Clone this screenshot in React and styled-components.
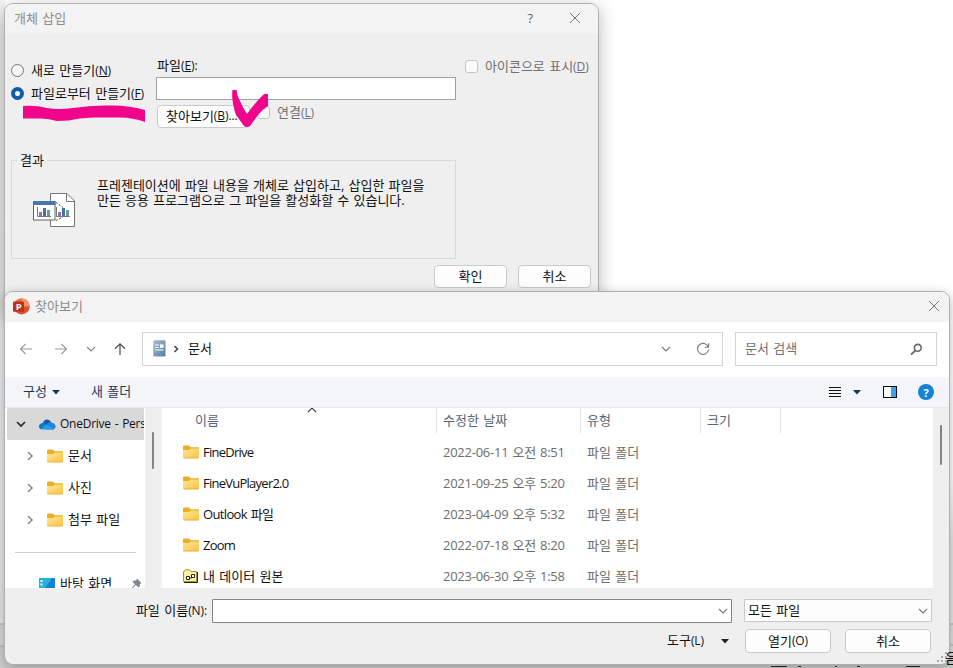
import React from 'react';
import styled, { createGlobalStyle } from 'styled-components';

const GlobalStyle = createGlobalStyle`
  * {
    box-sizing: border-box;
  }

  body {
    margin: 0;
    background: #fff;
    font-family: "Open Sans", "Noto Sans CJK KR", sans-serif;
    font-size: 13px;
    font-weight: 400;
    word-spacing: 1px;
    color: #111;
  }
`;

const treeItems = ['문서', '사진', '첨부 파일'];

const files = [
    { name: 'FineDrive', date: '2022-06-11 오전 8:51', type: '파일 폴더', spacing: '-0.75px' },
    { name: 'FineVuPlayer2.0', date: '2021-09-25 오후 5:20', type: '파일 폴더', spacing: '-0.75px' },
    { name: 'Outlook 파일', date: '2023-04-09 오후 5:32', type: '파일 폴더', spacing: '-0.65px' },
    { name: 'Zoom', date: '2022-07-18 오전 8:20', type: '파일 폴더', spacing: '-0.8px' },
    { name: '내 데이터 원본', date: '2023-06-30 오후 1:58', type: '파일 폴더', spacing: '0px', source: true },
];

const CloseIcon = () => (
    <svg width="12" height="12" viewBox="0 0 12 12">
        <path d="M1 1L11 11M11 1L1 11" stroke="#777" strokeWidth="1" fill="none" />
    </svg>
);

const Chevron = ({ d = 'M1 3L5 7L9 3', color = '#777', width = 1.1 }) => (
    <svg width="10" height="10" viewBox="0 0 10 10">
        <path d={d} stroke={color} strokeWidth={width} fill="none" />
    </svg>
);

const Caret = ({ color = '#1d3557' }) => (
    <svg width="8" height="5" viewBox="0 0 8 5">
        <path d="M0 0H8L4 4.6Z" fill={color} />
    </svg>
);

const FolderIcon = () => (
    <svg width="16" height="14" viewBox="0 0 16 14">
        <defs>
            <linearGradient id="folder" x1="0" y1="0" x2="1" y2="1">
                <stop offset="0" stopColor="#ffe69a" />
                <stop offset="1" stopColor="#f9c440" />
            </linearGradient>
        </defs>
        <path d="M0 1.6Q0 .5 1.1 .5H5.6L7.6 2.3H15Q16 2.3 16 3.3V8H0Z" fill="#e9ae24" />
        <path d="M0 5H6L7.8 3.5H15.2Q16 3.5 16 4.3V12.5Q16 13.3 15.2 13.3H.8Q0 13.3 0 12.5Z" fill="url(#folder)" />
        <path d="M.5 13H15.5" stroke="#dfa32a" strokeWidth=".7" />
    </svg>
);

const DataSourceIcon = () => (
    <svg width="16" height="14" viewBox="0 0 16 14">
        <path d="M.5 12.5V3L2.5 .8H6.5L8 2.5H13.5V12.5Z" fill="#fff3a6" stroke="#a98f2a" />
        <path d="M14.5 3V13.5H1" fill="none" stroke="#222" />
        <path d="M3.5 10.5V7.5H6.5V10.5ZM8.5 5.5H11.5V8.5H8.5ZM6.5 9H8.5V8" fill="#fff" stroke="#222" strokeWidth="1" />
    </svg>
);

const CloudIcon = () => (
    <svg width="17" height="11" viewBox="0 0 17 11">
        <path d="M1.2 6.5Q2.2 4.6 3.9 4.1Q4.8 .5 8 .5Q11 .4 12.3 3.4L8.5 7.5Z" fill="#0f5fb5" />
        <path d="M12 3.4Q16.3 4 16.6 7.4Q16.5 10.5 13 10.6H7L8.4 4.5Q10 3.2 12 3.4Z" fill="#2387d8" />
        <path d="M0 7.5Q.3 4.3 3.8 4.2Q5.2 4.1 7 5.2L14.8 10.1Q14 10.6 13 10.6H3.4Q.2 10.4 0 7.5Z" fill="#2b9ce8" />
        <path d="M0 7.5Q.3 4.3 3.8 4.2Q5.2 4.1 7 5.2L2 10.2Q.2 9.4 0 7.5Z" fill="#1478cc" />
    </svg>
);

const PowerPointIcon = () => (
    <svg width="17" height="17" viewBox="0 0 17 17">
        <circle cx="8.7" cy="8.4" r="8" fill="#d9532f" />
        <path d="M8.7 .4A8 8 0 0 1 16.7 8.4H8.7Z" fill="#ff9070" />
        <path d="M8.7 .4A8 8 0 0 0 .9 7H8.7Z" fill="#ee6c49" />
        <rect x="0" y="3.4" width="11" height="10.4" rx="1" fill="#b93418" />
        <text x="2.7" y="12" fontSize="9.5" fontWeight="700" fill="#fff">P</text>
    </svg>
);

const DocumentIcon = () => (
    <svg width="13" height="17" viewBox="0 0 13 17">
        <defs>
            <linearGradient id="doc" x1="0" y1="0" x2="1" y2="1">
                <stop offset="0" stopColor="#a9bfd5" />
                <stop offset="1" stopColor="#58799d" />
            </linearGradient>
        </defs>
        <rect x=".3" y=".3" width="12.2" height="16.2" rx="1.2" fill="url(#doc)" />
        <path d="M2.2 5H6M2.2 7.5H6M2.2 10H10.5" stroke="#fff" strokeWidth="1.1" />
        <rect x="7" y="4.4" width="3.6" height="3.4" fill="#fff" />
    </svg>
);

const EmbedIcon = () => (
    <svg width="43" height="35" viewBox="0 0 43 35">
        <path d="M17.5 .5H34L41.5 8V33.5H17.5Z" fill="#fff" stroke="#767676" />
        <path d="M33.5 .5V8.5H41.5" fill="none" stroke="#767676" />
        <rect x=".5" y="8.5" width="21.5" height="18.5" fill="#fff" stroke="#5f6468" />
        <rect x="0" y="8" width="22.5" height="4" fill="#4777aa" />
        <path d="M23 9.5L30 14.5M23 27.5L30 24" stroke="#555" strokeDasharray="2 1.5" />
        <path d="M4.5 14V23.5H18M23.5 14V23.5H37" fill="none" stroke="#777" />
        <path d="M6 19H9V23H6ZM25 19H28V23H25Z" fill="#9a6fb5" />
        <path d="M10 15H13V23H10ZM29 15H32V23H29Z" fill="#4272aa" />
        <path d="M14 17H17V23H14ZM33 17H36V23H33Z" fill="#6d9e8c" />
    </svg>
);

const InsertObjectDialog = () => (
    <InsertWindow>
        <TitleBar>
            <TitleText $left={9}>개체 삽입</TitleText>
            <HelpMark>?</HelpMark>
            <CloseButton $right={17}><CloseIcon /></CloseButton>
        </TitleBar>
        <Options>
            <RadioColumn>
                <RadioRow><Radio /><Label>새로 만들기<Key>(<u>N</u>)</Key></Label></RadioRow>
                <RadioRow><Radio $checked /><Label>파일로부터 만들기<Key>(<u>F</u>)</Key></Label></RadioRow>
            </RadioColumn>
            <FileColumn>
                <FieldLabel>파일<Key>(<u>E</u>):</Key></FieldLabel>
                <PathInput />
                <BrowseRow>
                    <BrowseButton>찾아보기<Key>(<u>B</u>)...</Key></BrowseButton>
                    <CheckLabel $link><CheckBox /><Label>연결<Key>(<u>L</u>)</Key></Label></CheckLabel>
                </BrowseRow>
            </FileColumn>
            <CheckLabel><CheckBox /><Label>아이콘으로 표시<Key>(<u>D</u>)</Key></Label></CheckLabel>
        </Options>
        <ResultGroup>
            <ResultLegend>결과</ResultLegend>
            <EmbedIcon />
            <ResultText>
                프레젠테이션에 파일 내용을 개체로 삽입하고, 삽입한 파일을<br />
                만든 응용 프로그램으로 그 파일을 활성화할 수 있습니다.
            </ResultText>
        </ResultGroup>
        <DialogActions>
            <Button $width={73} $height={23}>확인</Button>
            <Button $width={73} $height={23}>취소</Button>
        </DialogActions>
    </InsertWindow>
);

const BrowseDialog = () => (
    <BrowseWindow>
        <BrowseTitle>
            <PowerPointIcon />
            <TitleText $left={5}>찾아보기</TitleText>
            <CloseButton $right={9}><CloseIcon /></CloseButton>
        </BrowseTitle>
        <NavBar>
            <NavArrows>
                <svg width="14" height="14" viewBox="0 0 14 14">
                    <path d="M13 7H1.5M6.5 2L1.5 7L6.5 12" stroke="#999" fill="none" strokeWidth="1.1" />
                </svg>
                <svg width="14" height="14" viewBox="0 0 14 14">
                    <path d="M1 7H12.5M7.5 2L12.5 7L7.5 12" stroke="#999" fill="none" strokeWidth="1.1" />
                </svg>
                <Chevron color="#888" />
                <svg width="14" height="14" viewBox="0 0 14 14">
                    <path d="M7 13V1.8M2 6.8L7 1.8L12 6.8" stroke="#555" fill="none" strokeWidth="1.3" />
                </svg>
            </NavArrows>
            <AddressBox>
                <DocumentIcon />
                <Chevron d="M3.5 2L6.5 5L3.5 8" color="#444" width={1.5} />
                <AddressText>문서</AddressText>
                <Chevron color="#777" />
                <svg width="14" height="14" viewBox="0 0 14 14">
                    <path d="M12.2 5A5.5 5.5 0 1 0 12.5 7.5M12.6 1.3V5.2H8.7" stroke="#777" fill="none" strokeWidth="1.1" />
                </svg>
            </AddressBox>
            <SearchBox>
                <SearchHint>문서 검색</SearchHint>
                <svg width="13" height="13" viewBox="0 0 13 13">
                    <circle cx="7.8" cy="4.8" r="3.4" stroke="#666" strokeWidth="1.6" fill="none" />
                    <path d="M5.4 7.4L1 11.6" stroke="#666" strokeWidth="2" />
                </svg>
            </SearchBox>
        </NavBar>
        <ToolBar>
            <ToolText>구성</ToolText>
            <Caret />
            <ToolText $left={31}>새 폴더</ToolText>
            <ViewTools>
                <svg width="12" height="11" viewBox="0 0 12 11">
                    <path d="M0 .5H12M0 3.5H12M0 6.5H12M0 9.5H12" stroke="#111" strokeWidth="1" />
                </svg>
                <Caret />
                <svg width="14" height="12" viewBox="0 0 14 12">
                    <rect x=".5" y=".5" width="13" height="11" fill="#fff" stroke="#111" />
                    <rect x="8" y="1" width="5" height="10" fill="#38a5e6" />
                </svg>
                <HelpBadge>?</HelpBadge>
            </ViewTools>
        </ToolBar>
        <Content>
            <Sidebar>
                <DriveItem>
                    <Chevron color="#222" width={1.6} />
                    <CloudIcon />
                    <span>OneDrive - Pers</span>
                </DriveItem>
                {treeItems.map((item) => (
                    <TreeItem key={item}>
                        <Chevron d="M3 1L7 5L3 9" color="#888" width={1.5} />
                        <FolderIcon />
                        <Label>{item}</Label>
                    </TreeItem>
                ))}
                <TreeDivider />
                <DesktopItem>
                    <svg width="16" height="13" viewBox="0 0 16 13">
                        <rect width="16" height="13" rx="1" fill="#1583cc" />
                        <path d="M0 1Q0 0 1 0H13L4 13H0Z" fill="#26b2d8" />
                        <path d="M1.5 2H3.5V4H1.5ZM1.5 5.5H3.5V7.5H1.5Z" fill="#e8fbff" />
                    </svg>
                    <span>바탕 화면</span>
                    <svg width="11" height="12" viewBox="0 0 11 12">
                        <path d="M6 .5L10.5 5L9 6L8.7 8.5L7.5 9.5L4.8 7L1 11L.5 10.5L4 6.3L1.5 3.7L2.8 2.6L5.2 2.4Z" fill="#7c8790" />
                    </svg>
                </DesktopItem>
            </Sidebar>
            <ScrollTrack $top={24} $height={37} />
            <FileList>
                <ListHeader>
                    <HeadCell>이름<SortMark><Chevron d="M1 7L5 3L9 7" color="#444" /></SortMark></HeadCell>
                    <HeadCell>수정한 날짜</HeadCell>
                    <HeadCell>유형</HeadCell>
                    <HeadCell>크기</HeadCell>
                </ListHeader>
                {files.map((file) => (
                    <FileRow key={file.name}>
                        <FileName $spacing={file.spacing}>
                            {file.source ? <DataSourceIcon /> : <FolderIcon />}
                            {file.name}
                        </FileName>
                        <FileInfo $spacing="-0.25px">{file.date}</FileInfo>
                        <FileInfo>{file.type}</FileInfo>
                    </FileRow>
                ))}
            </FileList>
            <ScrollTrack $top={17} $height={40} />
        </Content>
        <Footer>
            <FooterRow>
                <NameLabel>파일 이름<Key>(N):</Key></NameLabel>
                <NameCombo><Chevron /></NameCombo>
                <TypeSelect><Label>모든 파일</Label><Chevron /></TypeSelect>
            </FooterRow>
            <ButtonRow>
                <ToolsLabel>도구<Key>(L)</Key></ToolsLabel>
                <Caret color="#222" />
                <Button $width={86} $height={24} $left={16}>열기<Key>(O)</Key></Button>
                <Button $width={86} $height={24} $left={14}>취소</Button>
            </ButtonRow>
        </Footer>
        <ResizeGrip width="10" height="10" viewBox="0 0 10 10">
            <path d="M8 0h2v2h-2zM4 4h2v2h-2zM8 4h2v2h-2zM0 8h2v2h-2zM4 8h2v2h-2zM8 8h2v2h-2z" fill="#aaa" />
        </ResizeGrip>
    </BrowseWindow>
);

const App = () => (
    <Desktop>
        <GlobalStyle />
        <LeftEdge />
        <RightEdge />
        <BottomEdge>
            <StatusPiece $left={771} $width={16} />
            <StatusPiece $left={798} $width={3} />
            <StatusPiece $left={835} $width={2} />
            <StatusPiece $left={857} $width={3} />
            <StatusPiece $left={906} $width={14} />
        </BottomEdge>
        <EdgeText>음</EdgeText>
        <InsertObjectDialog />
        <Marker width="260" height="50" viewBox="20 85 260 50">
            <path d="M23 106Q36 105 47 108Q58 110 73 108Q92 105 110 105.5Q128 105 145 110V122Q132 117 117 117.5H94Q78 118 69 120.5L57 121Q47 118 39 118.5L23 118.5Z" />
            <path d="M232.5 90H236.5Q237 96 240 101Q243 108 247 114Q253 105 263 95Q266 93 268 94.5V106Q263 109 258 115L250 126Q247 128 244 126L236 115Q231 100 232.5 90Z" />
        </Marker>
        <BrowseDialog />
    </Desktop>
);

const Desktop = styled.div`
  position: relative;
  width: 953px;
  height: 668px;
  overflow: hidden;
  background: #fff;
`;

const LeftEdge = styled.div`
  position: absolute;
  left: 0;
  top: 0;
  width: 5px;
  height: 668px;
  background: linear-gradient(#f6f6f6 0, #e9e9e9 40px, #e6e6e6 623px, #aaa 624px, #d8d8d8 625px, #d8d8d8 645px, #aaa 646px, #d0d0d0 647px);
`;

const RightEdge = styled.div`
  position: absolute;
  right: 0;
  top: 480px;
  width: 10px;
  height: 188px;
  background: linear-gradient(#fff 0, #e6e6e6 60px, #e6e6e6 143px, #aaa 144px, #dedede 145px, #dedede 164px, #aaa 165px, #dedede 166px);
`;

const BottomEdge = styled.div`
  position: absolute;
  left: 0;
  top: 655px;
  width: 953px;
  height: 13px;
  background: #cfcfcf;
`;

const StatusPiece = styled.div`
  position: absolute;
  left: ${(props) => props.$left}px;
  top: 11px;
  width: ${(props) => props.$width}px;
  height: 1px;
  background: #333;
`;

const EdgeText = styled.div`
  position: absolute;
  left: 945px;
  top: 649px;
  line-height: 18px;
  font-size: 14px;
  z-index: 3;
  width: 8px;
  overflow: hidden;
`;

const Window = styled.div`
  position: absolute;
  display: flex;
  flex-direction: column;
  border: 1px solid #adb0b0;
  border-radius: 9px;
  overflow: hidden;
  background: #efefef;
`;

const InsertWindow = styled(Window)`
  left: 4px;
  top: 3px;
  width: 595px;
  height: 310px;
  box-shadow: 0 4px 18px rgba(0, 0, 0, 0.28);
`;

const BrowseWindow = styled(Window)`
  left: 4px;
  top: 291px;
  width: 946px;
  height: 374px;
  box-shadow: 0 3px 12px rgba(0, 0, 0, 0.28);
`;

const TitleBar = styled.div`
  display: flex;
  align-items: center;
  flex: none;
  height: 30px;
  padding-bottom: 2px;
  background: #f3f3f3;
`;

const BrowseTitle = styled(TitleBar)`
  padding-left: 8px;
`;

const TitleText = styled.div`
  margin-left: ${(props) => props.$left}px;
  color: #8c8c8c;
  line-height: 18px;
`;

const HelpMark = styled.div`
  margin-left: auto;
  margin-right: 36px;
  color: #666;
`;

const CloseButton = styled.div`
  display: flex;
  margin-left: auto;
  margin-right: ${(props) => props.$right}px;

  ${HelpMark} + & {
    margin-left: 0;
  }
`;

const Label = styled.span`
  padding-bottom: 2px;
`;

const Key = styled.span`
  font-size: 12px;
  letter-spacing: -0.1px;

  u {
    text-underline-offset: 1px;
  }
`;

const Options = styled.div`
  display: grid;
  grid-template-columns: 145px 300px 128px;
  height: 98px;
  padding-left: 6px;
  padding-top: 22px;
`;

const RadioColumn = styled.div`
  padding-top: 3px;
`;

const RadioRow = styled.div`
  display: flex;
  align-items: center;
  height: 23px;
  white-space: nowrap;
`;

const Radio = styled.span`
  flex: none;
  width: 13px;
  height: 13px;
  margin-right: 7px;
  border: ${(props) => (props.$checked ? '4px solid #0b5cad' : '1px solid #777')};
  border-radius: 50%;
  background: ${(props) => (props.$checked ? '#fff' : '#f6f6f6')};
`;

const FileColumn = styled.div`
  display: flex;
  flex-direction: column;
`;

const FieldLabel = styled.div`
  height: 21px;
  padding-left: 1px;
  line-height: 18px;
`;

const PathInput = styled.div`
  height: 23px;
  border: 1px solid #a0a0a0;
  background: #fff;
`;

const BrowseRow = styled.div`
  display: flex;
  padding: 5px 0 0 1px;
`;

const Button = styled.div`
  display: flex;
  align-items: center;
  justify-content: center;
  flex: none;
  width: ${(props) => props.$width}px;
  height: ${(props) => props.$height}px;
  margin-left: ${(props) => props.$left || 0}px;
  padding-bottom: 2px;
  border: 1px solid #cacaca;
  border-radius: 4px;
  background: #fdfdfd;
  white-space: nowrap;
`;

const BrowseButton = styled(Button).attrs({ $width: 93, $height: 23 })`
  justify-content: flex-start;
  padding-left: 8px;
`;

const CheckLabel = styled.div`
  display: flex;
  align-items: center;
  height: 20px;
  margin-left: ${(props) => (props.$link ? 7 : 9)}px;
  margin-top: ${(props) => (props.$link ? -3 : 0)}px;
  color: #707070;
  white-space: nowrap;
`;

const CheckBox = styled.span`
  flex: none;
  width: 13px;
  height: 13px;
  margin-right: 7px;
  border: 1px solid #c4c4c4;
  border-radius: 3px;
  background: #fbfbfb;
`;

const ResultGroup = styled.div`
  position: relative;
  display: flex;
  align-items: flex-start;
  flex: none;
  width: 445px;
  height: 99px;
  margin: 28px 0 0 6px;
  padding: 0 0 0 21px;
  border: 1px solid #d9d9d9;

  > svg {
    margin-top: 32px;
  }
`;

const ResultLegend = styled.div`
  position: absolute;
  left: 5px;
  top: -10px;
  padding: 0 3px;
  line-height: 18px;
  background: #efefef;
`;

const ResultText = styled.div`
  margin: 17px 0 0 21px;
  line-height: 15px;
  word-spacing: 0.8px;
  white-space: nowrap;
`;

const DialogActions = styled.div`
  display: flex;
  gap: 11px;
  padding: 6px 0 0 429px;
`;

const Marker = styled.svg`
  position: absolute;
  left: 20px;
  top: 85px;
  fill: #f0048c;
`;

const NavBar = styled.div`
  display: flex;
  flex: none;
  height: 55px;
  padding-top: 10px;
  background: #fff;
`;

const NavArrows = styled.div`
  display: flex;
  align-items: center;
  width: 137px;
  height: 34px;
  padding-left: 14px;

  svg:nth-child(2) {
    margin-left: 21px;
  }

  svg:nth-child(3) {
    margin-left: 18px;
  }

  svg:nth-child(4) {
    margin-left: 17px;
  }
`;

const AddressBox = styled.div`
  display: flex;
  align-items: center;
  width: 581px;
  height: 34px;
  padding: 0 12px 0 10px;
  border: 1px solid #d5d5d5;

  svg:first-child {
    margin-bottom: 2px;
  }

  svg:nth-child(2) {
    margin-left: 5px;
  }

  svg:last-child {
    margin-left: 25px;
  }
`;

const AddressText = styled.div`
  flex: 1;
  margin-left: 7px;
  padding-bottom: 3px;
`;

const SearchBox = styled.div`
  display: flex;
  align-items: center;
  justify-content: space-between;
  width: 202px;
  height: 34px;
  margin-left: 12px;
  padding: 0 13px 0 9px;
  border: 1px solid #d5d5d5;
  color: #707070;
`;

const SearchHint = styled.div`
  padding-bottom: 3px;
`;

const ToolBar = styled.div`
  display: flex;
  align-items: center;
  flex: none;
  height: 31px;
  padding-left: 18px;
  border-bottom: 1px solid #e4e6e8;
  background: #f3f5f8;
`;

const ToolText = styled.div`
  margin-left: ${(props) => props.$left || 0}px;
  margin-right: 5px;
  padding-bottom: 3px;
  color: #1d3557;
`;

const ViewTools = styled.div`
  display: flex;
  align-items: center;
  margin-left: auto;
  padding-right: 15px;

  svg:nth-child(2) {
    margin: 0 22px 0 12px;
  }
`;

const HelpBadge = styled.div`
  display: flex;
  align-items: center;
  justify-content: center;
  width: 16px;
  height: 16px;
  margin-left: 21px;
  border-radius: 50%;
  background: #1383d8;
  color: #fff;
  font-size: 11px;
  font-weight: 700;
`;

const Content = styled.div`
  display: flex;
  flex: none;
  height: 180px;
  overflow: hidden;
`;

const Sidebar = styled.div`
  width: 140px;
  height: 180px;
  padding-left: 2px;
  overflow: hidden;
  background: #fff;
  white-space: nowrap;
`;

const DriveItem = styled.div`
  display: flex;
  align-items: center;
  width: 137px;
  height: 32px;
  padding-left: 9px;
  overflow: hidden;
  border-radius: 2px 0 0 2px;
  background: #d9d9d9;

  svg + svg {
    margin: 0 4px 0 13px;
  }

  svg,
  span {
    flex: none;
  }

  span {
    padding-bottom: 1px;
    font-size: 12px;
    letter-spacing: -0.25px;
  }
`;

const TreeItem = styled.div`
  display: flex;
  align-items: center;
  height: 32px;
  padding-left: 18px;
  padding-bottom: 1px;

  svg + svg {
    margin: 0 5px 0 12px;
  }
`;

const TreeDivider = styled.div`
  width: 121px;
  height: 1px;
  margin: 16px 0 20px 8px;
  background: #d0d0d0;
`;

const DesktopItem = styled.div`
  display: flex;
  align-items: center;
  height: 22px;
  padding-left: 32px;

  span {
    width: 71px;
    margin-left: 5px;
    padding-bottom: 3px;
  }
`;

const ScrollTrack = styled.div`
  flex: none;
  width: 16px;
  height: 180px;
  background: #efefef;

  &::before {
    content: "";
    display: block;
    width: 2px;
    height: ${(props) => props.$height}px;
    margin: ${(props) => props.$top}px 0 0 7px;
    border-radius: 1px;
    background: #858585;
  }
`;

const FileList = styled.div`
  width: 772px;
  border-left: 2px solid #fafafa;
  background: #fff;
`;

const columns = '274px 144px 120px 80px';

const ListHeader = styled.div`
  display: grid;
  grid-template-columns: ${columns};
  height: 25px;
  margin-bottom: 3px;
`;

const HeadCell = styled.div`
  position: relative;
  padding-left: 6px;
  border-right: 1px solid #e2e2e2;
  color: #56657a;
  line-height: 24px;

  &:first-child {
    padding-left: 32px;
  }
`;

const SortMark = styled.span`
  position: absolute;
  left: 144px;
  top: -3px;
  display: flex;
`;

const FileRow = styled.div`
  display: grid;
  grid-template-columns: ${columns};
  align-items: center;
  height: 31px;
  white-space: nowrap;
`;

const FileName = styled.div`
  display: flex;
  align-items: center;
  gap: 4px;
  padding-left: 20px;
  letter-spacing: ${(props) => props.$spacing};
`;

const FileInfo = styled.div`
  padding-left: 6px;
  color: #6d6d6d;
  letter-spacing: ${(props) => props.$spacing || 0};
`;

const Footer = styled.div`
  flex: 1;
  padding-top: 11px;
`;

const FooterRow = styled.div`
  display: flex;
  height: 24px;
`;

const NameLabel = styled.div`
  width: 207px;
  padding-right: 5px;
  line-height: 22px;
  text-align: right;
`;

const NameCombo = styled.div`
  display: flex;
  align-items: center;
  justify-content: flex-end;
  width: 520px;
  height: 24px;
  padding-right: 3px;
  border: 1px solid #868686;
  border-radius: 1px;
  background: #fff;
`;

const TypeSelect = styled.div`
  display: flex;
  align-items: center;
  justify-content: space-between;
  width: 188px;
  height: 23px;
  margin-left: 12px;
  padding: 0 3px;
  border: 1px solid #c8c8c8;
  border-radius: 1px;
  background: #fdfdfd;
`;

const ButtonRow = styled.div`
  display: flex;
  align-items: center;
  height: 24px;
  margin-top: 6px;
`;

const ToolsLabel = styled.div`
  width: 54px;
  margin-left: 662px;
  padding-bottom: 3px;
`;

const ResizeGrip = styled.svg`
  position: absolute;
  right: 2px;
  bottom: 2px;
`;

export default App;
